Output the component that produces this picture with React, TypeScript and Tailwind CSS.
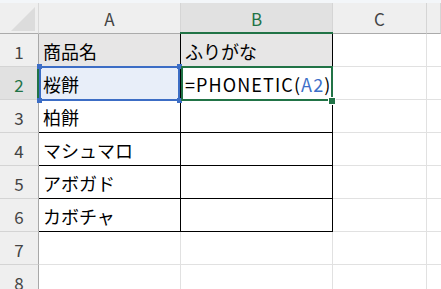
const cols = ['A', 'B', 'C', '']

const rows: {num: number; a?: string; b?: string}[] = [
  {num: 1, a: '商品名', b: 'ふりがな'},
  {num: 2, a: '桜餅'},
  {num: 3, a: '柏餅'},
  {num: 4, a: 'マシュマロ'},
  {num: 5, a: 'アボガド'},
  {num: 6, a: 'カボチャ'},
  {num: 7},
  {num: 8},
]

const font = "font-['Noto_Sans_CJK_JP',sans-serif]"

export default function App() {
  return (
    <div className={`relative w-[441px] h-[289px] overflow-hidden bg-white ${font}`}>
      <div className="h-[3px] bg-[#f3f6f9]" />

      <div className="grid grid-cols-[39px_142px_152px_94px_1fr] auto-rows-[33px] [grid-template-rows:31px]">
        {/* corner */}
        <div className="relative h-[31px] bg-[#efefef] border-r border-b border-r-[#d9d9d9] border-b-[#ababab]">
          <svg className="absolute left-0 top-0" width="38" height="30" viewBox="0 0 38 30">
            <polygon points="35,4 35,28 11,28" fill="#dcdcdc" />
          </svg>
        </div>
        {cols.map((c) => (
          <div
            key={c || 'd'}
            className={`flex items-center justify-center pt-[2px] h-[31px] text-[17px] border-r border-b border-r-[#d5d5d5] border-b-[#ababab] ${
              c === 'B' ? 'bg-[#e1e1e1] text-[#217346]' : 'bg-[#efefef] text-[#444]'
            }`}
          >
            {c}
          </div>
        ))}

        {rows.map((r) => {
          const inTable = r.num <= 6
          const edge = inTable ? 'border-r-black border-b-black' : 'border-r-[#e1e1e1] border-b-[#e1e1e1]'
          const header = r.num === 1
          return (
            <div key={r.num} className="contents">
              <div
                className={`flex items-center justify-center pt-[3px] text-[17px] border-r border-b border-r-[#a8a8a8] border-b-[#d4d4d4] ${
                  r.num === 2 ? 'bg-[#e1e1e1] text-[#217346]' : 'bg-[#efefef] text-[#444]'
                }`}
              >
                {r.num}
              </div>
              <div
                className={`flex items-center pl-[4px] pt-[3px] text-[18px] text-black border-r border-b ${edge} ${
                  header ? 'bg-[#e7e6e6]' : r.num === 2 ? 'bg-[#e8eef9]' : 'bg-white'
                }`}
              >
                {r.a}
              </div>
              <div
                className={`flex items-center pl-[4px] pt-[3px] text-[18px] text-black whitespace-nowrap border-r border-b ${edge} ${
                  header ? 'bg-[#e7e6e6]' : 'bg-white'
                }`}
              >
                {r.b}
                {r.num === 2 && (
                  <span className="tracking-[1.1px]">
                    =PHONETIC(<span className="text-[#3d6fc8]">A2</span>)
                  </span>
                )}
              </div>
              <div className="border-r border-b border-[#e1e1e1]" />
              <div className="border-b border-[#e1e1e1]" />
            </div>
          )
        })}
      </div>

      {/* active column / row markers */}
      <div className="absolute left-[180px] top-[32px] w-[153px] h-[2px] bg-[#217346]" />
      <div className="absolute left-[37px] top-[66px] w-[2px] h-[34px] bg-[#217346]" />

      {/* referenced cell A2 */}
      <div className="absolute left-[39px] top-[66px] w-[141px] h-[35px] border-2 border-[#3c6dc5]" />
      {[
        'left-[37px] top-[64px]',
        'left-[177px] top-[64px]',
        'left-[37px] top-[98px]',
        'left-[177px] top-[98px]',
      ].map((p) => (
        <div key={p} className={`absolute ${p} w-[5px] h-[5px] bg-[#3c6dc5]`} />
      ))}

      {/* active cell B2 */}
      <div className="absolute left-[181px] top-[66px] w-[152px] h-[35px] border-2 border-[#217346]" />
      <div className="absolute left-[329px] top-[98px] w-[6px] h-[6px] bg-[#217346] outline outline-1 outline-white" />
    </div>
  )
}
